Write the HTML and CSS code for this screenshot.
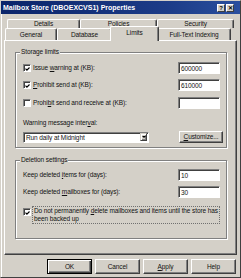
FILE: index.html
```html
<!DOCTYPE html>
<html>
<head>
<meta charset="utf-8">
<title>Mailbox Store Properties</title>
<link rel="stylesheet" href="styles.css">
</head>
<body>
<div class="window">
  <div class="titlebar">
    <span class="title">Mailbox Store (DBOEXCVS1) Properties</span>
    <div class="tbtns"><span class="tbtn">?</span><span class="tbtn">&#x2715;</span></div>
  </div>
  <div class="client">
    <div class="tabs">
      <div class="tabrow back">
        <div class="tab t-details">Details</div>
        <div class="tab t-policies">Policies</div>
        <div class="tab t-security">Security</div>
      </div>
      <div class="tabrow front">
        <div class="tab t-general">General</div>
        <div class="tab t-database">Database</div>
        <div class="tab sel t-limits">Limits</div>
        <div class="tab t-fulltext">Full-Text Indexing</div>
      </div>
    </div>
    <div class="panel">
      <div class="group storage">
        <span class="legend">Storage limits</span>
        <div class="row r1">
          <div class="chk"><span class="box"><svg viewBox="0 0 6 6" width="6" height="6"><path d="M0.6 2.6 L2.3 4.3 L5.4 1.2" fill="none" stroke="#000" stroke-width="1.4"/></svg></span><span>Issue <u>w</u>arning at (KB):</span></div>
          <div class="field">600000</div>
        </div>
        <div class="row r2">
          <div class="chk"><span class="box"><svg viewBox="0 0 6 6" width="6" height="6"><path d="M0.6 2.6 L2.3 4.3 L5.4 1.2" fill="none" stroke="#000" stroke-width="1.4"/></svg></span><span><u>P</u>rohibit send at (KB):</span></div>
          <div class="field">610000</div>
        </div>
        <div class="row r3">
          <div class="chk"><span class="box"></span><span>Prohi<u>b</u>it send and receive at (KB):</span></div>
          <div class="field"></div>
        </div>
        <div class="label interval">Warning message inter<u>v</u>al:</div>
        <div class="row r4">
          <div class="combo"><span>Run daily at Midnight</span><span class="arrow"><span class="tri"></span></span></div>
          <div class="btn customize"><span><u>C</u>ustomize...</span></div>
        </div>
      </div>
      <div class="group deletion">
        <span class="legend">Deletion settings</span>
        <div class="row r1">
          <span>Keep deleted <u>i</u>tems for (days):</span>
          <div class="field">10</div>
        </div>
        <div class="row r2">
          <span>Keep deleted <u>m</u>ailboxes for (days):</span>
          <div class="field">30</div>
        </div>
        <div class="chkblock">
          <span class="box"><svg viewBox="0 0 6 6" width="6" height="6"><path d="M0.6 2.6 L2.3 4.3 L5.4 1.2" fill="none" stroke="#000" stroke-width="1.4"/></svg></span>
          <span class="focus">Do not permanently <u>d</u>elete mailboxes and items until the store has<br>been backed up</span>
        </div>
      </div>
    </div>
    <div class="buttons">
      <div class="btn pbtn default">OK</div>
      <div class="btn pbtn">Cancel</div>
      <div class="btn pbtn"><span><u>A</u>pply</span></div>
      <div class="btn pbtn">Help</div>
    </div>
  </div>
</div>
</body>
</html>
```
FILE: styles.css
```css
* { box-sizing: border-box; }
html, body { margin: 0; padding: 0; }
body {
  font-family: "Liberation Sans", Arial, sans-serif;
  font-size: 6.5px;
  letter-spacing: -0.1px;
  color: #111;
  background: #d4d0c8;
}
u { text-underline-offset: 1px; }

.window {
  width: 241px;
  height: 278px;
  background: #d4d0c8;
  border: 1px solid;
  border-color: #d4d0c8 #404040 #404040 #d4d0c8;
  box-shadow: inset 1px 1px 0 #fff;
  display: flex;
  flex-direction: column;
}

.titlebar {
  height: 13px;
  flex: none;
  background: linear-gradient(to right, #0a246a, #1c3c88 70%, #2a4f9e);
  display: flex;
  align-items: center;
  justify-content: space-between;
  padding: 0 6px 0 2px;
}
.title {
  color: #fff;
  font-weight: bold;
  font-size: 7px;
  letter-spacing: 0;
  line-height: 8px;
  white-space: nowrap;
}
.tbtns { display: flex; gap: 1px; }
.tbtn {
  width: 8px;
  height: 8px;
  background: #d4d0c8;
  border: 1px solid;
  border-color: #fff #404040 #404040 #fff;
  color: #000;
  font-size: 6px;
  font-weight: bold;
  letter-spacing: 0;
  line-height: 6px;
  display: flex;
  align-items: center;
  justify-content: center;
}

.client {
  display: flex;
  flex-direction: column;
  padding: 5px 3px 0 3px;
}

.tabrow { display: flex; }
.tabrow.back { margin-left: 3px; height: 9px; }
.tabrow.front { margin-left: 1px; height: 12px; }
.tab {
  border-top: 1px solid #fff;
  border-left: 1px solid #fff;
  border-right: 1px solid #404040;
  box-shadow: inset -1px 0 0 #808080;
  border-radius: 2px 2px 0 0;
  display: flex;
  align-items: center;
  justify-content: center;
  line-height: 8px;
  white-space: nowrap;
  background: #d4d0c8;
}
.back .tab { height: 9px; }
.front .tab { height: 12px; }
.t-details { width: 73px; }
.t-policies { width: 77px; }
.t-security { width: 77px; }
.t-general { width: 52px; }
.t-database { width: 55px; }
.t-limits { width: 45px; }
.t-fulltext { width: 74px; }
.tab.sel {
  width: 49px;
  height: 15px;
  margin: -2px -2px -1px;
  position: relative;
  z-index: 1;
  padding-bottom: 2px;
}

.panel {
  height: 215px;
  border: 1px solid;
  border-color: #fff #404040 #404040 #fff;
  box-shadow: inset -1px -1px 0 #808080;
  padding: 11px 9px 0 10px;
}

.group {
  position: relative;
  border: 1px solid #808080;
  box-shadow: 1px 1px 0 #fff, inset 1px 1px 0 #fff;
}
.legend {
  position: absolute;
  top: -5px;
  left: 4px;
  padding: 0 1px;
  background: #d4d0c8;
  line-height: 8px;
  white-space: nowrap;
}
.storage { height: 96px; padding: 9px 6px 4px 7px; }
.deletion { height: 79px; margin-top: 12px; padding: 8px 6px 14px 7px; }

.row {
  display: flex;
  align-items: center;
  justify-content: space-between;
  height: 12px;
  line-height: 8px;
  white-space: nowrap;
}
.storage .r2 { margin-top: 5px; }
.storage .r3 { margin-top: 6px; }
.storage .r4 { margin-top: 4px; }
.deletion .r2 { margin-top: 5px; }
.label { line-height: 8px; white-space: nowrap; }
.interval { margin-top: 10px; }

.chk { display: flex; align-items: center; gap: 2px; }
.box {
  width: 8px;
  height: 8px;
  flex: none;
  background: #fff;
  border: 1px solid;
  border-color: #808080 #fff #fff #808080;
  box-shadow: inset 1px 1px 0 #404040;
  display: flex;
  align-items: center;
  justify-content: center;
}
.box svg { display: block; margin: 1px 0 0 1px; }

.field {
  width: 42px;
  height: 12px;
  background: #fff;
  border: 1px solid;
  border-color: #808080 #fff #fff #808080;
  box-shadow: inset 1px 1px 0 #404040;
  padding: 1px 0 0 2px;
  line-height: 9px;
}

.combo {
  width: 126px;
  height: 11px;
  background: #fff;
  border: 1px solid;
  border-color: #808080 #fff #fff #808080;
  box-shadow: inset 1px 1px 0 #404040;
  display: flex;
  align-items: center;
  justify-content: space-between;
  padding: 1px 1px 0 2px;
}
.arrow {
  width: 7px;
  height: 8px;
  margin-top: -1px;
  background: #d4d0c8;
  border: 1px solid;
  border-color: #d4d0c8 #404040 #404040 #d4d0c8;
  box-shadow: inset 1px 1px 0 #fff, inset -1px -1px 0 #808080;
  display: flex;
  align-items: center;
  justify-content: center;
}
.tri {
  width: 0;
  height: 0;
  border-left: 2px solid transparent;
  border-right: 2px solid transparent;
  border-top: 2px solid #000;
}

.btn {
  background: #d4d0c8;
  border: 1px solid;
  border-color: #fff #404040 #404040 #fff;
  box-shadow: inset -1px -1px 0 #808080;
  display: flex;
  align-items: center;
  justify-content: center;
  line-height: 8px;
  white-space: nowrap;
}
.customize { width: 44px; height: 12px; margin-right: -3px; }

.chkblock {
  display: flex;
  align-items: flex-start;
  gap: 1px;
  margin-top: 8px;
}
.chkblock .box { margin-top: 2px; }
.focus {
  flex: 1;
  border: 1px dotted #707070;
  padding: 0 1px;
  line-height: 8px;
  white-space: nowrap;
}

.buttons {
  display: flex;
  justify-content: flex-end;
  gap: 3px;
  margin-top: 4px;
  padding-right: 1px;
}
.pbtn { width: 45px; height: 15px; }
.pbtn.default {
  border-color: #000;
  box-shadow: inset 1px 1px 0 #fff, inset -1px -1px 0 #404040, inset -2px -2px 0 #808080;
}
```
